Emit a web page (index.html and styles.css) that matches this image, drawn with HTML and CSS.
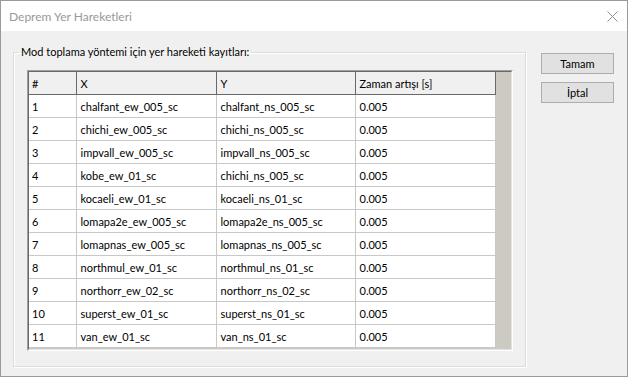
FILE: index.html
```html
<!DOCTYPE html>
<html lang="tr">
<head>
  <meta charset="UTF-8" />
  <title>Deprem Yer Hareketleri</title>
  <link rel="stylesheet" href="styles.css">
</head>
<body>
  <div class="window">
    <div class="titlebar">
      <span class="title">Deprem Yer Hareketleri</span>
      <svg class="close" width="11" height="11" viewBox="0 0 11 11">
        <path d="M0.5 0.5 L10.5 10.5 M10.5 0.5 L0.5 10.5" stroke="#8f8f8f" stroke-width="1" fill="none" />
      </svg>
    </div>

    <div class="client">
      <fieldset class="group">
        <legend>Mod toplama yöntemi için yer hareketi kayıtları:</legend>
        <div class="grid">
          <div class="grid-inner">
            <table>
              <colgroup>
                <col class="c-num"><col class="c-x"><col class="c-y"><col class="c-dt">
              </colgroup>
              <thead>
                <tr><th>#</th><th>X</th><th>Y</th><th>Zaman artışı [s]</th></tr>
              </thead>
              <tbody>
                <tr><td>1</td><td>chalfant_ew_005_sc</td><td>chalfant_ns_005_sc</td><td>0.005</td></tr>
                <tr><td>2</td><td>chichi_ew_005_sc</td><td>chichi_ns_005_sc</td><td>0.005</td></tr>
                <tr><td>3</td><td>impvall_ew_005_sc</td><td>impvall_ns_005_sc</td><td>0.005</td></tr>
                <tr><td>4</td><td>kobe_ew_01_sc</td><td>chichi_ns_005_sc</td><td>0.005</td></tr>
                <tr><td>5</td><td>kocaeli_ew_01_sc</td><td>kocaeli_ns_01_sc</td><td>0.005</td></tr>
                <tr><td>6</td><td>lomapa2e_ew_005_sc</td><td>lomapa2e_ns_005_sc</td><td>0.005</td></tr>
                <tr><td>7</td><td>lomapnas_ew_005_sc</td><td>lomapnas_ns_005_sc</td><td>0.005</td></tr>
                <tr><td>8</td><td>northmul_ew_01_sc</td><td>northmul_ns_01_sc</td><td>0.005</td></tr>
                <tr><td>9</td><td>northorr_ew_02_sc</td><td>northorr_ns_02_sc</td><td>0.005</td></tr>
                <tr><td>10</td><td>superst_ew_01_sc</td><td>superst_ns_01_sc</td><td>0.005</td></tr>
                <tr><td>11</td><td>van_ew_01_sc</td><td>van_ns_01_sc</td><td>0.005</td></tr>
              </tbody>
            </table>
            <div class="scroll-fill"></div>
          </div>
        </div>
      </fieldset>

      <div class="buttons">
        <button>Tamam</button>
        <button>İptal</button>
      </div>
    </div>
  </div>
</body>
</html>
```

FILE: styles.css
```css
html, body {
  margin: 0;
  padding: 0;
}

body {
  font-family: Lato, "Liberation Sans", sans-serif;
  font-size: 11px;
  color: #000;
  background: #fff;
}

.window {
  width: 628px;
  height: 377px;
  box-sizing: border-box;
  border: 1px solid #9a9a9a;
  display: flex;
  flex-direction: column;
}

.titlebar {
  height: 30px;
  flex: none;
  background: #fff;
  display: flex;
  align-items: center;
  justify-content: space-between;
  padding: 0 9px 0 8px;
}

.title {
  font-size: 12px;
  color: #999;
}

.close {
  display: block;
  margin-top: 1px;
}

.client {
  flex: 1;
  background: #f0f0f0;
  display: flex;
  align-items: flex-start;
  padding: 13px 13px 0 12px;
}

.group {
  margin: 0;
  width: 513px;
  box-sizing: border-box;
  padding: 10px 12px 15px 13px;
  border: 1px solid #dcdcdc;
  box-shadow: inset 1px 1px 0 #fff, 1px 1px 0 #fff;
}

.group legend {
  margin-left: -8px;
  padding: 0 2px;
  line-height: 16px;
  color: #000;
}

.grid {
  width: 486px;
  box-sizing: border-box;
  border: 1px solid;
  border-color: #a0a0a0 #fff #fff #a0a0a0;
}

.grid-inner {
  display: flex;
  align-items: flex-start;
  background: #cdcac2;
  border: 1px solid;
  border-color: #696969 #e3e3e3 #e3e3e3 #696969;
  padding-bottom: 1px;
}

table {
  border-collapse: collapse;
  table-layout: fixed;
  width: 466px;
  flex: none;
}

.c-num { width: 47px; }
.c-x { width: 140px; }
.c-y { width: 139px; }
.c-dt { width: 140px; }

th, td {
  height: 22px;
  padding: 0 4px;
  text-align: left;
  font-weight: normal;
  white-space: nowrap;
  overflow: hidden;
}

th {
  background: #f0f0f0;
  border-right: 1px solid #696969;
  border-bottom: 1px solid #696969;
}

td {
  background: #fff;
  border-right: 1px solid #c8c8c8;
  border-bottom: 1px solid #c8c8c8;
}

td:first-child, th:first-child {
  padding-left: 3px;
}

.scroll-fill {
  flex: 1;
}

.buttons {
  display: flex;
  flex-direction: column;
  gap: 8px;
  margin: 9px 0 0 15px;
}

.buttons button {
  width: 73px;
  height: 21px;
  padding: 0;
  background: #e1e1e1;
  border: 1px solid #adadad;
  font-family: inherit;
  font-size: 11px;
  font-weight: 400;
  color: #000;
}
```
